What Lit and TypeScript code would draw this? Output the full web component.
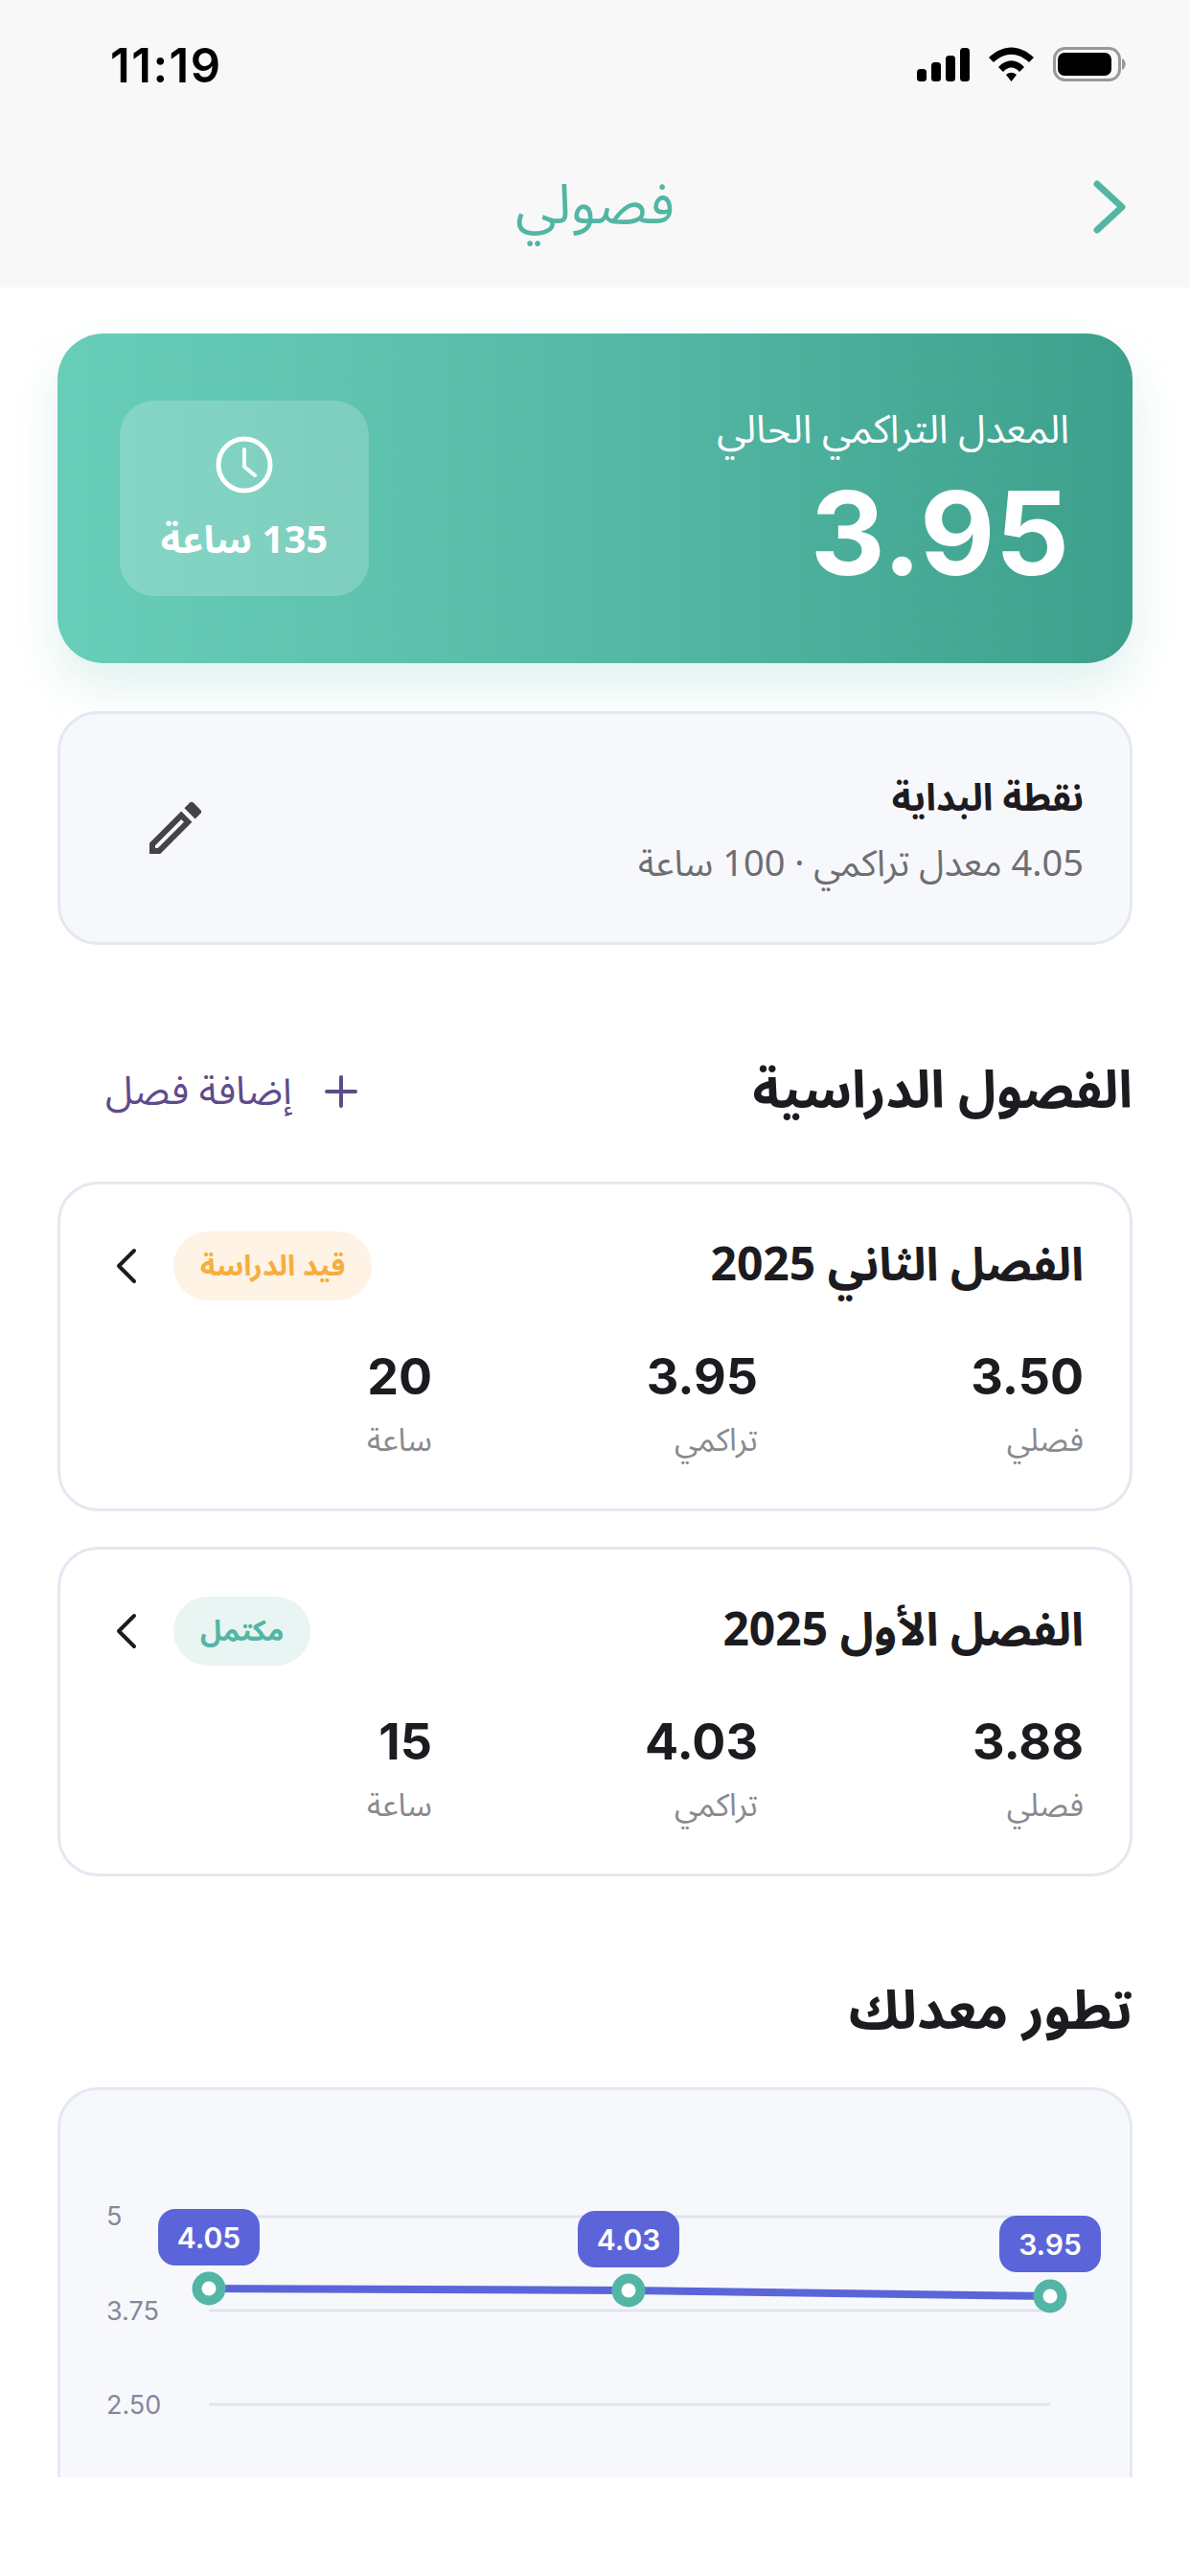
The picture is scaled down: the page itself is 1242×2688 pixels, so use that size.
import { LitElement, html, css, svg } from "lit";
import { customElement } from "lit/decorators.js";

const seasons = [
  { title: "الفصل الثاني 2025", badge: "قيد الدراسة", kind: "progress", term: "3.50", cum: "3.95", hours: "20" },
  { title: "الفصل الأول 2025", badge: "مكتمل", kind: "done", term: "3.88", cum: "4.03", hours: "15" },
];

const points = [
  { x: 158, y: 210, label: "4.05", top: 127 },
  { x: 596, y: 212, label: "4.03", top: 129 },
  { x: 1036, y: 218, label: "3.95", top: 134 },
];

@customElement("app-root")
export class AppRoot extends LitElement {
  static styles = css`
    :host { display: block; width: 1242px; height: 2688px; overflow: hidden; background: #fff;
      font-family: "Noto Sans Arabic", "Noto Sans", "DejaVu Sans", "Liberation Sans", sans-serif; color: #1c1b20; font-stretch: 85%; }
    .page { direction: rtl; height: 2585px; overflow: hidden; display: flex; flex-direction: column; }
    .top { background: #f8f8f8; height: 300px; flex: none; display: flex; flex-direction: column; direction: ltr; }
    .status { height: 130px; padding: 0 63px 0 115px; display: flex; justify-content: space-between; align-items: center; flex: none; }
    .time { font: 600 49px "Inter", sans-serif; color: #000; letter-spacing: 1.500px; padding-top: 6px; }
    .status svg { display: block; margin-top: 4px; }
    .nav { flex: 1; position: relative; display: flex; align-items: center; justify-content: center; }
    .nav-title { font-size: 58px; color: #53b6a4; line-height: 80px; }
    .nav-back { position: absolute; right: 66px; top: 56px; display: block; }
    .main { padding: 48px 60px 0; display: flex; flex-direction: column; }
    .hero { height: 344px; border-radius: 48px; flex: none; background: linear-gradient(90deg, #68ceb9 0%, #54b7a4 55%, #3da08c 100%);
      box-shadow: 0 24px 48px rgba(83, 182, 164, 0.18); display: flex; align-items: center; justify-content: space-between; padding: 0 66px 0 65px; }
    .hero-l { font-size: 41px; color: #fff; line-height: 60px; }
    .hero-v { font: 700 121px/130px "Inter", sans-serif; color: #fff; direction: ltr; text-align: right; margin-top: 12px; }
    .pill { width: 260px; height: 204px; box-sizing: border-box; padding-top: 4px; border-radius: 36px; background: rgba(255,255,255,.2); display: flex; flex-direction: column; align-items: center; justify-content: center; gap: 24px; color: #fff; }
    .pill-t { font-size: 40px; font-weight: 700; line-height: 50px; }
    .start { margin-top: 50px; height: 244px; box-sizing: border-box; border: 3px solid #e4e8f1; border-radius: 42px; background: #f7f8fc; display: flex; align-items: center; justify-content: space-between; padding: 0 48px 0 84px; }
    .start-text { margin-top: 6px; }
    .start-t { font-size: 39px; font-weight: 700; line-height: 60px; }
    .start-s { font-size: 38px; color: #6e6e73; line-height: 56px; margin-top: 10px; }
    .sec { display: flex; align-items: center; justify-content: space-between; margin-top: 103px; height: 100px; }
    h2 { margin: 0; font-size: 54px; font-weight: 700; line-height: 80px; }
    .trend h2 { font-size: 56px; }
    .add { display: flex; align-items: center; gap: 34px; color: #5f4b8b; font-size: 41px; padding-left: 50px; }
    .add svg { display: block; }
    .season { margin-top: 44px; height: 344px; box-sizing: border-box; border: 3px solid #e4e8f1; border-radius: 42px; background: #fff; padding: 49px 48px 0; display: flex; flex-direction: column; }
    .season + .season { margin-top: 37px; }
    .s-head { display: flex; align-items: center; justify-content: space-between; height: 72px; }
    .s-title { font-size: 48px; font-weight: 700; line-height: 72px; }
    .s-right { display: flex; align-items: center; gap: 37px; padding-left: 9px; }
    .s-right svg { display: block; }
    .badge { height: 72px; padding: 0 28px; border-radius: 36px; display: flex; align-items: center; font-size: 30px; font-weight: 700; }
    .progress { background: #fef3e4; color: #f6ae3f; }
    .done { background: #e9f5f2; color: #53b6a4; }
    .stats { display: grid; grid-template-columns: 340px 340px 340px; margin-top: 49px; }
    .num { font: 700 52px/62px "Inter", sans-serif; direction: ltr; text-align: right; }
    .lab { font-size: 33px; color: #8a8a8e; line-height: 48px; margin-top: 12px; }
    .trend { margin-top: 91px; height: 100px; display: flex; align-items: center; flex: none; }
    .chart { margin-top: 29px; height: 500px; flex: none; box-sizing: border-box; border: 3px solid #e4e8f1; border-radius: 42px; background: #f7f8fc; position: relative; direction: ltr; }
    .chart svg { position: absolute; left: -3px; top: -3px; display: block; }
    .axis { font: 400 27px "Inter", sans-serif; fill: #85879a; }
    .tip { font: 600 30px "Inter", sans-serif; fill: #fff; text-anchor: middle; }
  `;

  render() {
    return html`<div class="page">
      <div class="top">
        <div class="status">
          <span class="time">11:19</span>
          <svg width="222" height="40" viewBox="0 0 222 40">
            <rect x="0" y="25" width="10" height="13" rx="3.500" fill="#000"/><rect x="15" y="18" width="10" height="20" rx="3.500" fill="#000"/><rect x="30" y="11" width="10" height="27" rx="3.500" fill="#000"/><rect x="45" y="3" width="10" height="35" rx="3.500" fill="#000"/>
            <path d="M75 13 C90 -1 107 -1 122 13 L117 18 C105 7 92 7 80 18Z M85 23 C93 14 104 14 112 23 L107 28 C102 22 95 22 90 28Z M93 31 C97 28 100 28 104 31 L98.500 38Z" fill="#000"/>
            <rect x="143.500" y="3.500" width="68" height="33" rx="11" fill="none" stroke="#999" stroke-width="3"/>
            <rect x="147" y="8" width="56" height="24" rx="7" fill="#000"/>
            <path d="M214 14 C219 16 219 24 214 26Z" fill="#999"/>
          </svg>
        </div>
        <div class="nav">
          <span class="nav-title">فصولي</span>
          <svg class="nav-back" width="36" height="60" viewBox="0 0 36 60"><path d="M5 6 L31 30 L5 54" fill="none" stroke="#53b6a4" stroke-width="7" stroke-linecap="round" stroke-linejoin="round"/></svg>
        </div>
      </div>
      <div class="main">
        <div class="hero">
          <div>
            <div class="hero-l">المعدل التراكمي الحالي</div>
            <div class="hero-v">3.95</div>
          </div>
          <div class="pill">
            <svg width="62" height="62" viewBox="0 0 62 62"><circle cx="31" cy="31" r="27" fill="none" stroke="#fff" stroke-width="5"/><path d="M31 15 V33 L42 42" fill="none" stroke="#fff" stroke-width="4" stroke-linecap="round" stroke-linejoin="round"/></svg>
            <div class="pill-t">135 ساعة</div>
          </div>
        </div>
        <div class="start">
          <div class="start-text">
            <div class="start-t">نقطة البداية</div>
            <div class="start-s">4.05 معدل تراكمي · 100 ساعة</div>
          </div>
          <svg width="72" height="72" viewBox="0 0 24 24"><path fill="#444349" d="M3 17.250V21h3.750L17.810 9.940l-3.750-3.750L3 17.250zM5.920 19H5v-.920l9.060-9.060.920.920L5.920 19zM20.710 7.040a1 1 0 0 0 0-1.410l-2.340-2.340a1 1 0 0 0-1.410 0l-1.830 1.830 3.750 3.750 1.830-1.830z"/></svg>
        </div>
        <div class="sec">
          <h2>الفصول الدراسية</h2>
          <div class="add">
            <svg width="34" height="34" viewBox="0 0 34 34"><path d="M17 2 V32 M2 17 H32" stroke="#5f4b8b" stroke-width="4" stroke-linecap="round"/></svg>
            <span>إضافة فصل</span>
          </div>
        </div>
        ${seasons.map(
          (s) => html`<div class="season">
            <div class="s-head">
              <div class="s-title">${s.title}</div>
              <div class="s-right">
                <span class="badge ${s.kind}">${s.badge}</span>
                <svg width="24" height="38" viewBox="0 0 24 38"><path d="M20 3 L4 19 L20 35" fill="none" stroke="#1c1b20" stroke-width="4" stroke-linecap="round" stroke-linejoin="round"/></svg>
              </div>
            </div>
            <div class="stats">
              <div><div class="num">${s.term}</div><div class="lab">فصلي</div></div>
              <div><div class="num">${s.cum}</div><div class="lab">تراكمي</div></div>
              <div><div class="num">${s.hours}</div><div class="lab">ساعة</div></div>
            </div>
          </div>`
        )}
        <div class="trend"><h2>تطور معدلك</h2></div>
        <div class="chart">
          <svg width="1122" height="500" viewBox="0 0 1122 500">
            <text class="axis" x="51" y="144">5</text>
            <text class="axis" x="51" y="243">3.75</text>
            <text class="axis" x="51" y="341">2.50</text>
            ${[135, 233, 331].map((y) => svg`<line x1="158" x2="1036" y1=${y} y2=${y} stroke="#e0e4f0" stroke-width="3"/>`)}
            <polyline points=${points.map((p) => `${p.x},${p.y}`).join(" ")} fill="none" stroke="#5b65d9" stroke-width="8"/>
            ${points.map(
              (p) => svg`
                <rect x=${p.x - 53} y=${p.top} width="106" height="59" rx="18" fill="#5b65d9"/>
                <text class="tip" x=${p.x} y=${p.top + 41}>${p.label}</text>
                <circle cx=${p.x} cy=${p.y} r="12.500" fill="#fff" stroke="#53b6a4" stroke-width="10"/>`
            )}
          </svg>
        </div>
      </div>
    </div>`;
  }
}
